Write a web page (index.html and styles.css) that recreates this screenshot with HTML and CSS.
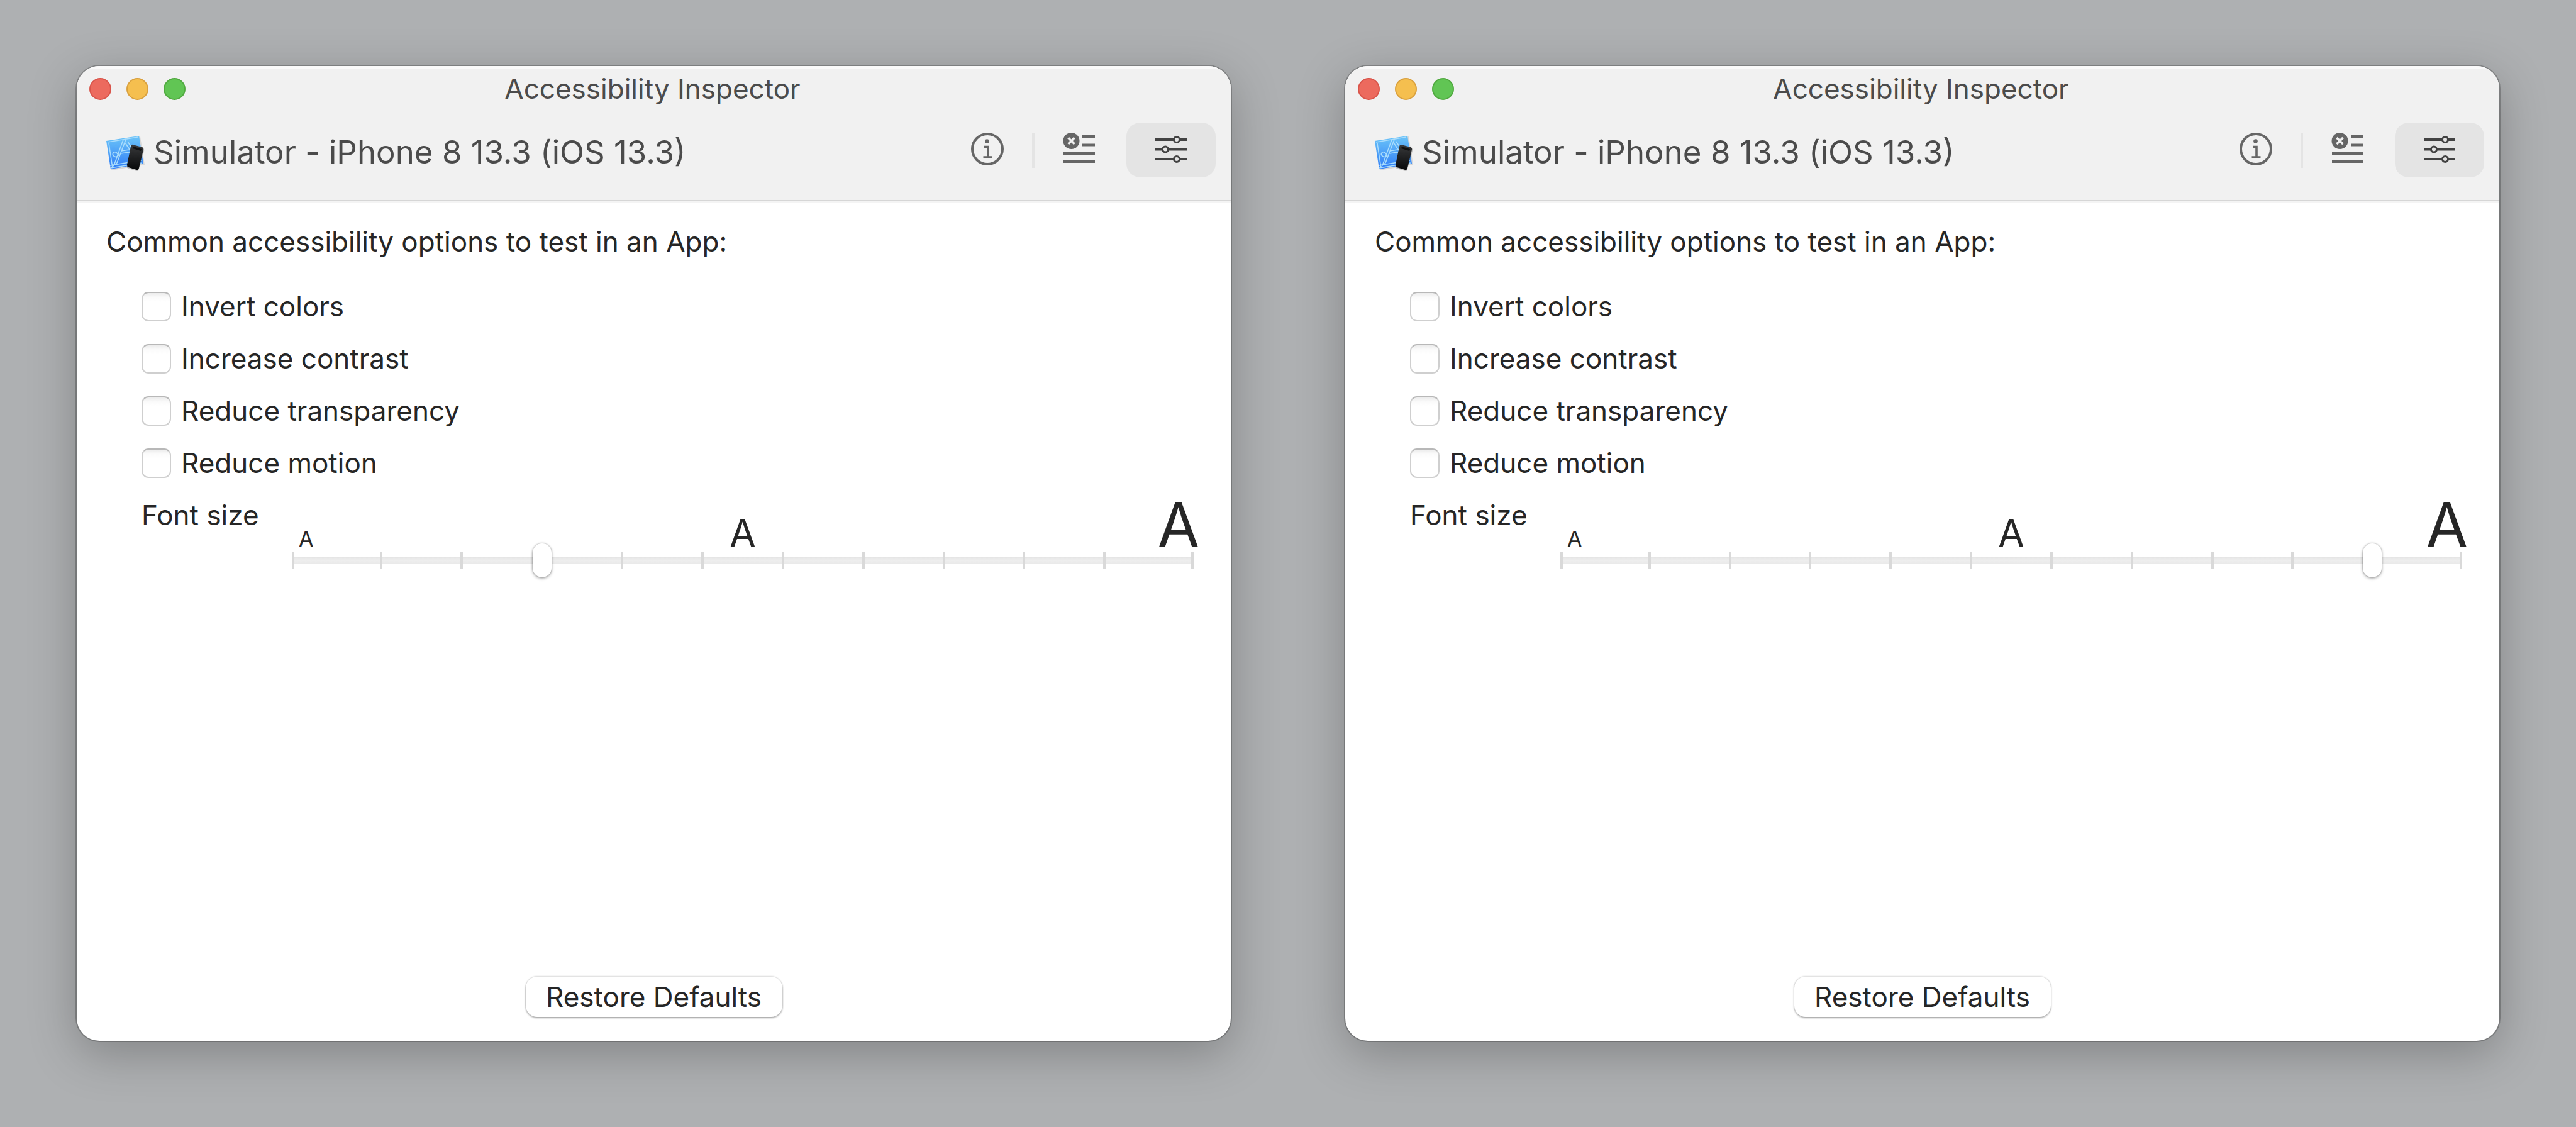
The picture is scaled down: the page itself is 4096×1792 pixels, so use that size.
FILE: index.html
```html
<!DOCTYPE html>
<html lang="en">
<head>
<meta charset="utf-8">
<title>Accessibility Inspector</title>
<link rel="stylesheet" href="styles.css">
</head>
<body>
<svg class="sprite" aria-hidden="true">
  <defs>
    <linearGradient id="blueprint" x1="0" y1="0" x2="0" y2="1"><stop offset="0" stop-color="#6cc5f8"/><stop offset="1" stop-color="#2f7cf6"/></linearGradient>
    <linearGradient id="handset" x1="0" y1="0" x2="0" y2="1"><stop offset="0" stop-color="#38393b"/><stop offset="1" stop-color="#08090a"/></linearGradient>
  </defs>
  <symbol id="app" viewBox="0 0 64 60">
    <path d="M4 14 57 5 64 50 11 59z" fill="#000" opacity=".1"/>
    <path d="M3 12 55 4 62 48 10 57z" fill="url(#blueprint)"/>
    <g fill="none" stroke="#a9dcfc" stroke-width="1.6">
      <path d="M5 14 53 6M9 51l50-8M10 55l50-8M7 16l6 39"/>
      <path d="M30 10 17 46M34 10 20 47M30 10l5-1M33 15l12 18M37 13l11 17M26 32l20-3M27 28l18-3M17 46l-2 5 5-4"/>
      <path d="M23 34c-3 5-7 4-9 1s1-6 4-5 2 4 5 3"/>
    </g>
    <path d="m45 20 16 4q3 1 2 4l-8 29q-1 4-4 3l-13-4q-3-1-2-4l6-29q1-4 3-3z" fill="#000" opacity=".18"/>
    <path d="m45 18 15 4q3 1 2 4l-7 29q-1 4-4 3l-13-4q-2-1-2-4l6-29q1-4 3-3z" fill="url(#handset)"/>
    <path d="m46 21 13 4-1 3-13-4z" fill="#111"/>
  </symbol>
  <symbol id="info" viewBox="0 0 52 52">
    <circle cx="26" cy="26" r="24" fill="none" stroke="currentColor" stroke-width="4"/>
    <circle cx="25.500" cy="13.500" r="3.300" fill="currentColor"/>
    <path d="M21 22.500h6v16.500M19.500 39h14" fill="none" stroke="currentColor" stroke-width="3.600"/>
  </symbol>
  <symbol id="audit" viewBox="0 0 52 52">
    <circle cx="13.500" cy="13" r="13" fill="currentColor"/>
    <path d="m8.500 8 10 10m0-10-10 10" stroke="#f1f1f1" stroke-width="3.600"/>
    <path d="M31 6h20M31 19.500h20M1 33h50M1 46h50" stroke="currentColor" stroke-width="4"/>
  </symbol>
  <symbol id="settings" viewBox="0 0 52 52">
    <g fill="none" stroke="currentColor" stroke-width="4">
      <path d="M1 11h29M40 11h11M1 26.500h11M22 26.500h29M1 42h29M40 42h11"/>
      <g stroke-width="3"><circle cx="35" cy="11" r="4.500"/><circle cx="17" cy="26.500" r="4.500"/><circle cx="35" cy="42" r="4.500"/></g>
    </g>
  </symbol>
</svg>
<main class="desktop">
  <section class="window">
    <header class="header">
      <div class="titlebar">
        <div class="lights">
          <button class="light close" aria-label="Close"></button>
          <button class="light minimize" aria-label="Minimize"></button>
          <button class="light zoom" aria-label="Zoom"></button>
        </div>
        <h1 class="title">Accessibility Inspector</h1>
      </div>
      <div class="toolbar">
        <button class="target"><svg class="app-icon"><use href="#app"/></svg>Simulator - iPhone 8 13.3 (iOS 13.3)</button>
        <nav class="tools">
          <button class="tool" aria-label="Inspection"><svg class="icon"><use href="#info"/></svg></button>
          <span class="divider"></span>
          <button class="tool" aria-label="Audit"><svg class="icon"><use href="#audit"/></svg></button>
          <button class="tool selected" aria-label="Settings"><svg class="icon"><use href="#settings"/></svg></button>
        </nav>
      </div>
    </header>
    <div class="content">
      <h2 class="heading">Common accessibility options to test in an App:</h2>
      <div class="options">
        <label class="option"><input class="box" type="checkbox">Invert colors</label>
        <label class="option"><input class="box" type="checkbox">Increase contrast</label>
        <label class="option"><input class="box" type="checkbox">Reduce transparency</label>
        <label class="option"><input class="box" type="checkbox">Reduce motion</label>
        <div class="font-size">
          <label class="font-label" for="size-1">Font size</label>
          <div class="scale">
            <div class="samples"><span class="small">A</span><span class="medium">A</span><span class="large">A</span></div>
            <div class="slider">
              <div class="ticks"><i></i><i></i><i></i><i></i><i></i><i></i><i></i><i></i><i></i><i></i><i></i></div>
              <input class="range" id="size-1" type="range" min="0" max="11" value="3">
            </div>
          </div>
        </div>
      </div>
      <button class="restore">Restore Defaults</button>
    </div>
  </section>

  <section class="window">
    <header class="header">
      <div class="titlebar">
        <div class="lights">
          <button class="light close" aria-label="Close"></button>
          <button class="light minimize" aria-label="Minimize"></button>
          <button class="light zoom" aria-label="Zoom"></button>
        </div>
        <h1 class="title">Accessibility Inspector</h1>
      </div>
      <div class="toolbar">
        <button class="target"><svg class="app-icon"><use href="#app"/></svg>Simulator - iPhone 8 13.3 (iOS 13.3)</button>
        <nav class="tools">
          <button class="tool" aria-label="Inspection"><svg class="icon"><use href="#info"/></svg></button>
          <span class="divider"></span>
          <button class="tool" aria-label="Audit"><svg class="icon"><use href="#audit"/></svg></button>
          <button class="tool selected" aria-label="Settings"><svg class="icon"><use href="#settings"/></svg></button>
        </nav>
      </div>
    </header>
    <div class="content">
      <h2 class="heading">Common accessibility options to test in an App:</h2>
      <div class="options">
        <label class="option"><input class="box" type="checkbox">Invert colors</label>
        <label class="option"><input class="box" type="checkbox">Increase contrast</label>
        <label class="option"><input class="box" type="checkbox">Reduce transparency</label>
        <label class="option"><input class="box" type="checkbox">Reduce motion</label>
        <div class="font-size">
          <label class="font-label" for="size-2">Font size</label>
          <div class="scale">
            <div class="samples"><span class="small">A</span><span class="medium">A</span><span class="large">A</span></div>
            <div class="slider">
              <div class="ticks"><i></i><i></i><i></i><i></i><i></i><i></i><i></i><i></i><i></i><i></i><i></i></div>
              <input class="range" id="size-2" type="range" min="0" max="11" value="10">
            </div>
          </div>
        </div>
      </div>
      <button class="restore">Restore Defaults</button>
    </div>
  </section>
</main>
</body>
</html>
```
FILE: styles.css
```css
*, *::before, *::after { box-sizing: border-box; }

body {
  margin: 0;
  background: #aeb0b2;
  color: #262626;
  font: 400 44px/56px Inter, "Liberation Sans", sans-serif;
}

button {
  margin: 0;
  padding: 0;
  border: 0;
  background: none;
  color: inherit;
  font: inherit;
}

h1, h2 { margin: 0; font: inherit; }

/* Kept rendered at zero size so that its gradients stay usable */
.sprite { position: absolute; width: 0; height: 0; }

.desktop {
  display: flex;
  gap: 182px;
  min-height: 100vh;
  padding: 105px 122px 137px;
}

.window {
  display: flex;
  flex: 1 1 0;
  flex-direction: column;
  overflow: clip;
  border-radius: 36px;
  background: #fff;
  box-shadow: 0 0 0 2px rgba(0, 0, 0, .22), 0 20px 76px rgba(0, 0, 0, .25);
}

/* Title bar and toolbar */
.header {
  height: 215px;
  padding: 8px 24px 0 20px;
  border-bottom: 2px solid #d6d6d6;
  background: #f1f1f1;
  box-shadow: inset 0 4px #fafafa, 0 2px #f4f4f4;
  color: #4b4b4b;
}

.titlebar {
  display: grid;
  grid-template-columns: 1fr auto 1fr;
  align-items: center;
}

.lights { display: flex; gap: 24px; }

.light {
  width: 35px;
  height: 35px;
  border: 2px solid;
  border-radius: 50%;
}

.close { border-color: #d9544a; background: #ec6a5e; }
.minimize { border-color: #d9a03e; background: #f5bf4f; }
.zoom { border-color: #50a93f; background: #61c554; }

.toolbar {
  display: flex;
  align-items: flex-start;
  justify-content: space-between;
  padding-top: 26px;
}

.target {
  display: flex;
  align-items: center;
  gap: 14px;
  height: 94px;
  padding-left: 24px;
  font-size: 51px;
  white-space: nowrap;
}

.app-icon { width: 64px; height: 60px; }

.tools { display: flex; align-items: center; }

.tool {
  display: flex;
  align-items: center;
  justify-content: center;
  width: 142px;
  height: 87px;
  padding-bottom: 4px;
  border-radius: 22px;
  color: #666;
}

.tool.selected { margin-left: 4px; background: #e4e4e4; color: #424242; }

.icon { width: 52px; height: 52px; }

.divider { width: 4px; height: 56px; background: #e4e4e4; }

/* Options */
.content {
  display: flex;
  flex: 1;
  flex-direction: column;
  padding: 36px 59px 38px 47px;
}

.options {
  display: flex;
  flex-direction: column;
  gap: 27px;
  padding: 47px 0 0 56px;
}

.option { display: flex; align-items: center; align-self: flex-start; gap: 16px; }

.box {
  appearance: none;
  width: 47px;
  height: 47px;
  margin: 0;
  border: 2px solid #cfcfcf;
  border-top-color: #b8b8b8;
  border-radius: 11px;
  background: linear-gradient(#ececec, #fbfbfb 7px, #fff 14px);
}

/* Font size slider */
.font-size { display: flex; align-items: flex-start; }

.font-label { width: 239px; }

.scale { flex: 1; }

.samples {
  display: grid;
  grid-template-columns: 1fr auto 1fr;
  align-items: baseline;
  height: 86px;
}

.small { padding-left: 11px; font-size: 34px; line-height: 40px; }
.medium { font-size: 60px; line-height: 66px; }
.large { justify-self: end; margin-right: -9px; font-size: 96px; line-height: 86px; }

.slider {
  display: grid;
  grid-template-rows: 28px;
  align-items: center;
}

.ticks, .range { grid-area: 1 / 1; }

.ticks {
  display: flex;
  height: 28px;
  border-left: 4px solid #d9d9d9;
  background: linear-gradient(#e3e3e3, #eee 6px, #e9e9e9) 0 50% / 100% 12px no-repeat;
}

.ticks i { flex: 1 1 0; border-right: 4px solid #d9d9d9; }
.ticks i:first-child, .ticks i:last-child { flex-basis: 16px; }

.range {
  appearance: none;
  width: 100%;
  height: 54px;
  margin: 0;
  background: none;
}

.range::-webkit-slider-thumb {
  appearance: none;
  width: 30px;
  height: 54px;
  border-radius: 15px;
  background: #fff;
  box-shadow: 0 0 2px 1px rgba(0, 0, 0, .16), 0 2px 5px rgba(0, 0, 0, .3);
}

.restore {
  align-self: center;
  width: 408px;
  height: 64px;
  margin: auto 0 0 12px;
  border-radius: 18px;
  box-shadow: 0 0 2px 1px rgba(0, 0, 0, .14), 0 2px 3px rgba(0, 0, 0, .26);
}
```
